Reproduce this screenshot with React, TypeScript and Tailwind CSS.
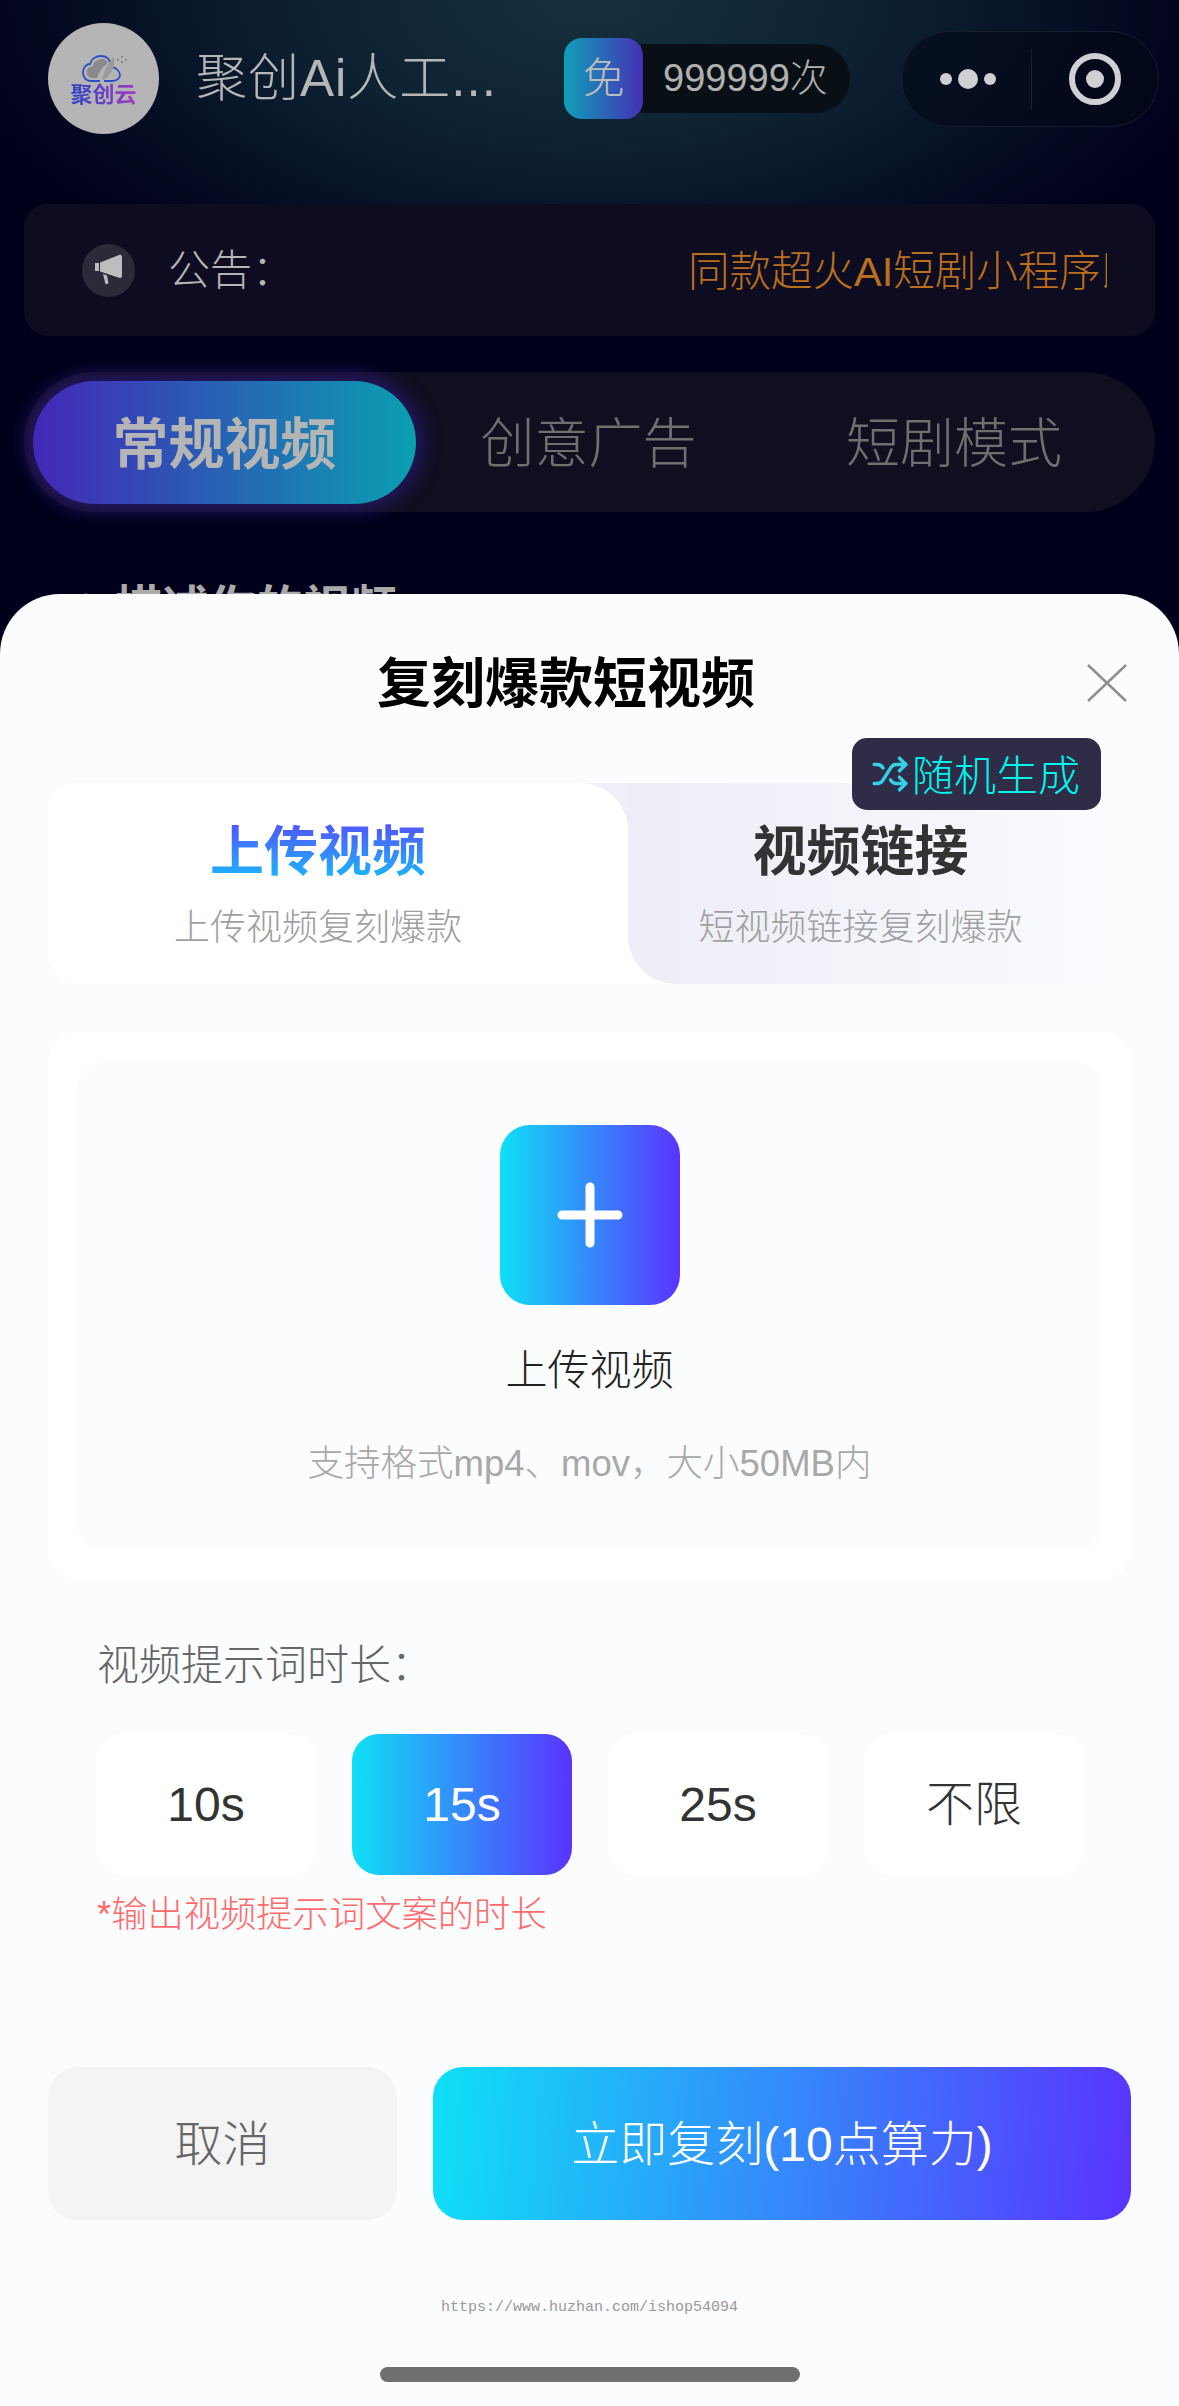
import { Pencil, Shuffle } from "lucide-react";

const FONT = "font-['Liberation_Sans','Noto_Sans_CJK_SC',sans-serif]";
const GRAD = "bg-[linear-gradient(90deg,#0fe0f6,#5a33ff)]";

function Logo() {
  return (
    <div className="flex h-[111px] w-[111px] shrink-0 flex-col items-center rounded-full bg-[#b5b5b5] pt-[32px]">
      <svg className="ml-[3px]" width="46" height="27" viewBox="0 0 46 27" fill="none">
        <path d="M9 23C5 22 4 18 5 15C6 12 9 12 11 11C12 6 16 4 20 4C23 4 26 6 25 9C20 12 17 17 15 23Z" fill="#8a8a8e" />
        <path d="M18 26H9C3 26 1 21 1 17C1 12 5 9 8 9C9 4 14 1 19 1C24 1 28 4 28 8" stroke="#2b4fc4" strokeWidth="1.800" />
        <path d="M30 12C35 13 38 17 38 20C38 24 34 26 30 26H22" stroke="#2b4fc4" strokeWidth="1.800" />
        <path d="M20 25C28 23 33 14 32 2C28 5 23 12 20 25Z" fill="#9a9aa0" />
        <circle cx="36" cy="5" r="0.900" fill="#777" />
        <circle cx="40" cy="2" r="0.900" fill="#777" />
        <circle cx="40" cy="7" r="0.900" fill="#777" />
        <circle cx="44" cy="5" r="0.900" fill="#777" />
      </svg>
      <span className="mt-[1px] bg-[linear-gradient(90deg,#2b46c2,#a53bc4)] bg-clip-text text-[22px] leading-[24px] font-bold text-transparent">聚创云</span>
    </div>
  );
}

function Megaphone() {
  return (
    <svg width="30" height="32" viewBox="0 0 30 32">
      <path d="M1 9h4v8H1z" fill="#bdbdbd" />
      <path d="M6 8.500 L25 1c2-.6 3 .5 3 2v19c0 1.500-1.300 2.500-3 1.800L6 17.500z" fill="#bdbdbd" />
      <path d="M9 20l4 1.500 1.500 8-3 .8z" fill="#bdbdbd" />
    </svg>
  );
}

function Duration({ label, active }: { label: string; active?: boolean }) {
  return (
    <div className={`flex h-[141px] w-[220px] items-center justify-center rounded-[27px] text-[48px] font-light ${active ? `${GRAD} text-white` : "bg-white text-[#333]"}`}>
      {label}
    </div>
  );
}

export default function App() {
  return (
    <div className={`relative h-[2406px] w-[1179px] overflow-hidden bg-[#00001a] bg-[radial-gradient(ellipse_640px_330px_at_590px_0px,#16303d_0%,#0d2131_45%,#00001a_100%)] ${FONT}`}>
      <div className="flex items-center pt-[23px] pl-[48px]">
        <Logo />
        <div className="ml-[37px] w-[368px] text-[51px] leading-[60px] font-light tracking-[1px] text-[#b6b6b6]">聚创Ai人工...</div>
        <div className="flex h-[81px] w-[286px] items-center">
          <div className="relative z-10 flex h-[81px] w-[79px] items-center justify-center rounded-[18px] bg-[linear-gradient(90deg,#0f9fb8,#4530b5)] text-[42px] font-light text-[#bdbdbd]">免</div>
          <div className="-ml-[2px] flex h-[69px] flex-1 items-center rounded-r-full bg-[#081016] pl-[22px] text-[38px] font-light text-[#b0b0b0]">999999次</div>
        </div>
        <div className="ml-[51px] flex h-[96px] w-[258px] items-center rounded-full border border-[#181d2e] bg-[#040818]/60">
          <div className="flex w-[129px] items-center justify-center gap-[6px] pl-[2px]">
            <span className="h-[12px] w-[12px] rounded-full bg-[#d0d0d4]" />
            <span className="h-[20px] w-[20px] rounded-full bg-[#d0d0d4]" />
            <span className="h-[12px] w-[12px] rounded-full bg-[#d0d0d4]" />
          </div>
          <div className="h-[60px] w-px bg-[#1d2233]" />
          <div className="flex flex-1 items-center justify-center">
            <div className="flex h-[52px] w-[52px] items-center justify-center rounded-full border-[6px] border-[#d0d0d4]">
              <span className="h-[18px] w-[18px] rounded-full bg-[#d0d0d4]" />
            </div>
          </div>
        </div>
      </div>

      <div className="mx-[24px] mt-[70px] flex h-[132px] items-center rounded-[24px] bg-[#0e0c20] pl-[58px]">
        <div className="flex h-[53px] w-[53px] items-center justify-center rounded-full bg-[#2a2a38]">
          <Megaphone />
        </div>
        <div className="ml-[33px] w-[520px] text-[42px] font-light text-[#b4b4b4]">公告：</div>
        <div className="w-[419px] overflow-hidden pt-[4px] text-[41.500px] font-light whitespace-nowrap text-[#b8701f]">同款超火AI短剧小程序即将上线</div>
      </div>

      <div className="mx-[24px] mt-[36px] flex h-[140px] items-center rounded-full bg-[#100f20] pl-[9px] text-[54px]">
        <div className="flex h-[123px] w-[383px] items-center justify-center rounded-full bg-[linear-gradient(90deg,#4427b8,#0a9fb0)] pt-[6px] text-[56px] font-bold text-[#b5b5b5] shadow-[0_0_18px_6px_#25176a]">常规视频</div>
        <div className="flex w-[345px] justify-center pt-[5px] font-light text-[#6f6f6f]">创意广告</div>
        <div className="flex w-[386px] justify-center pt-[5px] font-light text-[#6f6f6f]">短剧模式</div>
      </div>

      <div className="mt-[66px] flex items-center pl-[62px] text-[47px] leading-[60px] font-bold text-[#aaa]">
        <Pencil className="mr-[23px] h-[30px] w-[30px]" strokeWidth={3} />
        描述你的视频
      </div>

      <div className="absolute inset-x-0 top-[594px] bottom-0 rounded-t-[60px] bg-[#fbfcfe] px-[48px]">
        <div className="mt-[63px] pr-[47px] text-center text-[54px] leading-[54px] font-bold text-black">复刻爆款短视频</div>
        <svg className="absolute top-[70px] left-[1087px]" width="40" height="38" viewBox="0 0 40 38" fill="none" stroke="#8f8f8f" strokeWidth="2.500">
          <path d="M1 1l38 36M39 1L1 37" />
        </svg>

        <div className="relative mt-[72px] flex h-[201px] overflow-hidden rounded-[30px] bg-white">
          <div className="absolute top-0 left-[520px] h-[60px] w-[60px] bg-[#eff0f7]" />
          <div className="relative flex w-[580px] flex-col items-center rounded-tr-[48px] bg-white pt-[33px] pr-[40px]">
            <div className="bg-[linear-gradient(180deg,#5a48ff,#12c6fa)] bg-clip-text text-[54px] leading-[72px] font-bold text-transparent">上传视频</div>
            <div className="mt-[16px] text-[36px] leading-[48px] font-light text-[#a0a0a0]">上传视频复刻爆款</div>
          </div>
          <div className="flex flex-1 flex-col items-center rounded-bl-[48px] bg-[linear-gradient(90deg,#ecedf6,#fbfcfe)] pt-[33px] pr-[38px]">
            <div className="text-[54px] leading-[72px] font-bold text-[#333]">视频链接</div>
            <div className="mt-[16px] text-[36px] leading-[48px] font-light text-[#a0a0a0]">短视频链接复刻爆款</div>
          </div>
        </div>
        <div className="absolute top-[144px] left-[852px] flex h-[72px] w-[249px] items-center rounded-[15px] bg-[#2f2c47] pl-[19px] text-[42px] font-light text-[#00f5ec]">
          <Shuffle className="mr-[3px] h-[38px] w-[38px] text-[#36cfe6]" strokeWidth={2.2} />
          <span className="pt-[4px]">随机生成</span>
        </div>

        <div className="mt-[48px] h-[548px] rounded-[30px] bg-white p-[30px]">
          <div className="flex h-[488px] flex-col items-center rounded-[24px] bg-[#fbfcfe] pt-[63px]">
            <div className={`flex h-[180px] w-[180px] items-center justify-center rounded-[30px] ${GRAD}`}>
              <svg width="66" height="66" viewBox="0 0 66 66" stroke="#fff" strokeWidth="9" strokeLinecap="round">
                <path d="M33 5v56M5 33h56" />
              </svg>
            </div>
            <div className="mt-[41px] text-[42px] leading-[50px] font-light text-[#222]">上传视频</div>
            <div className="mt-[43px] text-[36.500px] leading-[50px] font-light text-[#a8a8a8]">支持格式mp4、mov，大小50MB内</div>
          </div>
        </div>

        <div className="mt-[65px] pl-[49px] text-[42px] leading-[42px] font-light text-[#666]">视频提示词时长：</div>
        <div className="mt-[47px] flex gap-[36px] pl-[48px]">
          <Duration label="10s" />
          <Duration label="15s" active />
          <Duration label="25s" />
          <Duration label="不限" />
        </div>
        <div className="mt-[22px] pl-[49px] text-[36.300px] leading-[36px] font-light text-[#ff6b6b]">*输出视频提示词文案的时长</div>

        <div className="mt-[134px] flex h-[153px] gap-[36px]">
          <div className="flex w-[349px] items-center justify-center rounded-[30px] bg-[#f4f4f4] pt-[3px] text-[48px] font-light text-[#666]">取消</div>
          <div className="flex flex-1 items-center justify-center rounded-[30px] bg-[linear-gradient(95deg,#0fe0f6,#5a33ff)] pt-[3px] text-[48px] font-light text-white">立即复刻(10点算力)</div>
        </div>

        <div className="mt-[79px] text-center font-['Liberation_Mono',monospace] text-[15px] leading-[18px] text-[#999]">https://www.huzhan.com/ishop54094</div>
        <div className="mx-auto mt-[50px] h-[15px] w-[420px] rounded-full bg-[#6f6f6f]" />
      </div>
    </div>
  );
}
